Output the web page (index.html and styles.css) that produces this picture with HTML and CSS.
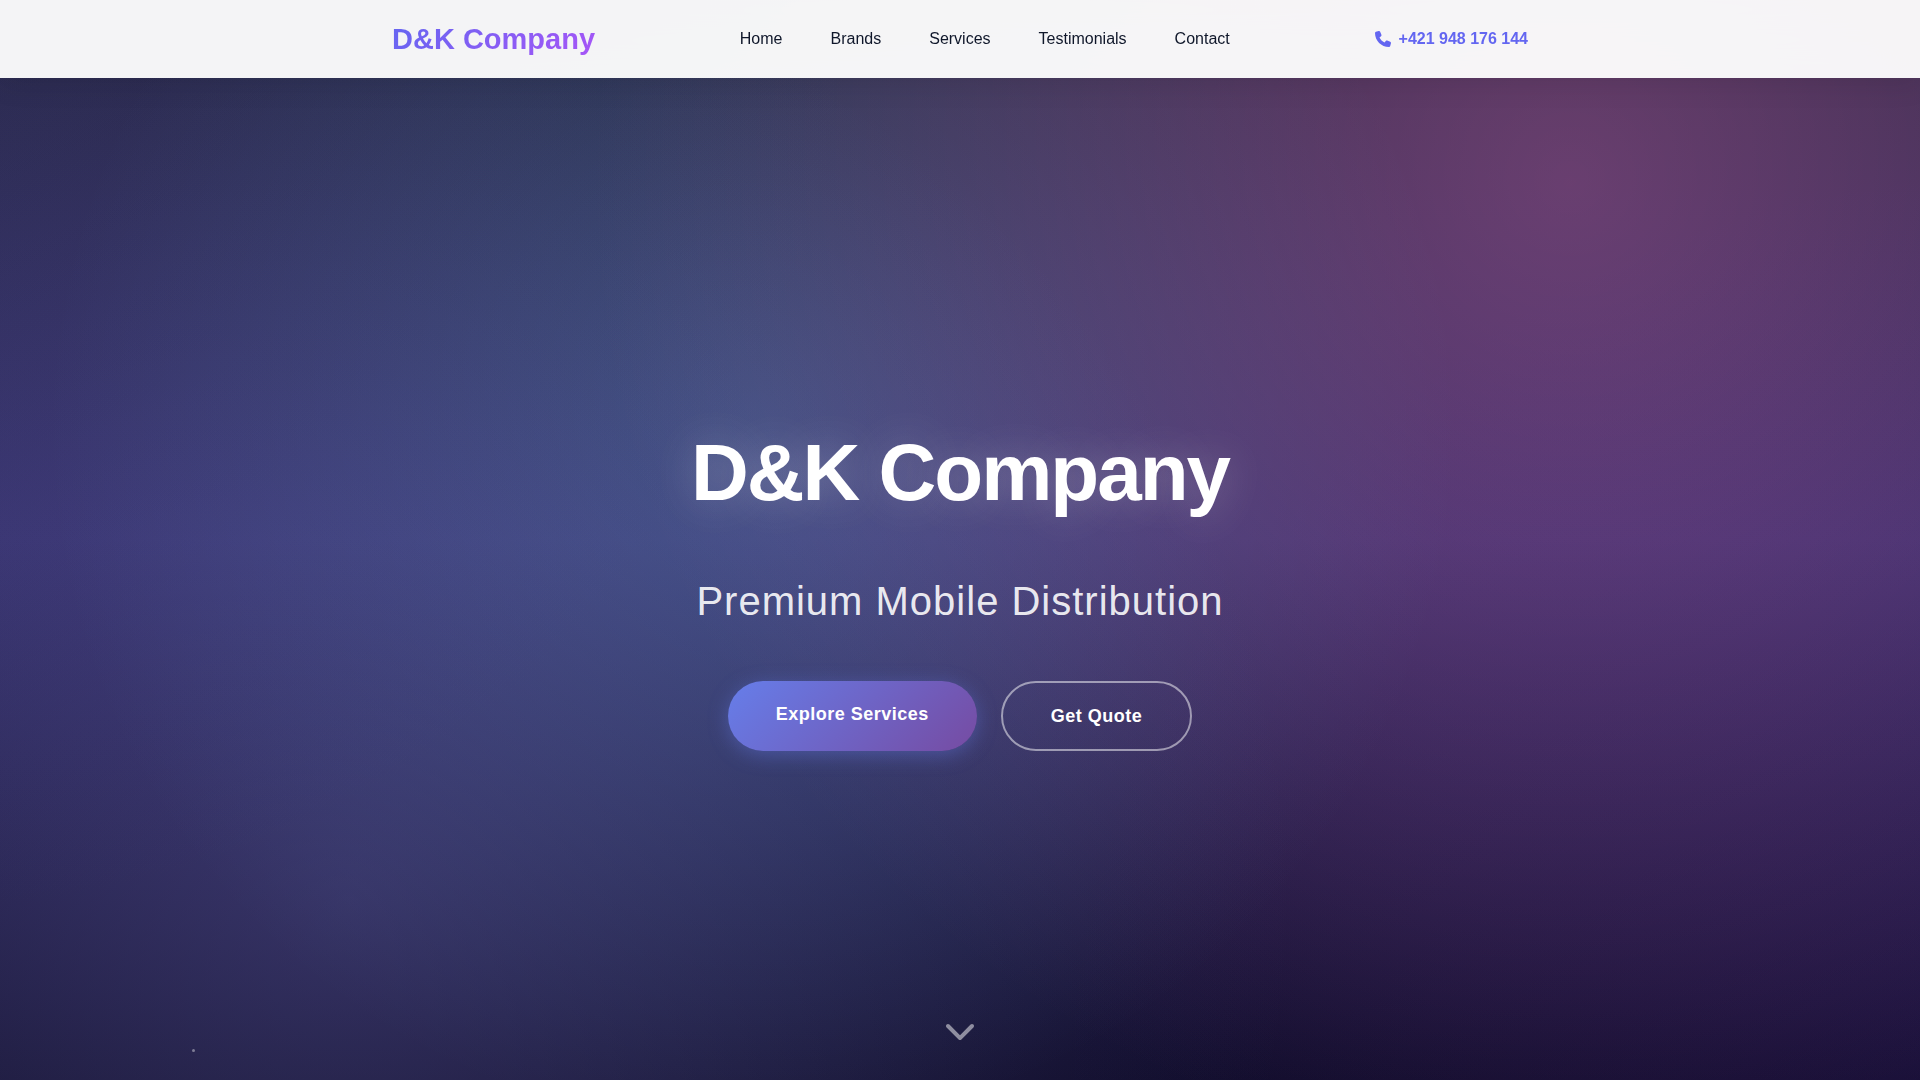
FILE: index.html
```html
<!DOCTYPE html>
<html lang="en">
<head>
    <meta charset="UTF-8">
    <meta name="viewport" content="width=device-width, initial-scale=1.0">
    <title>D&amp;K Company</title>
    <link rel="stylesheet" href="styles.css">
</head>
<body>
    <header class="header">
        <div class="header-container">
            <a href="#home" class="logo">D&amp;K Company</a>
            <nav class="nav">
                <a href="#home">Home</a>
                <a href="#brands">Brands</a>
                <a href="#services">Services</a>
                <a href="#testimonials">Testimonials</a>
                <a href="#contact">Contact</a>
            </nav>
            <a href="tel:+421948176144" class="header-phone">
                <svg class="phone-icon" viewBox="0 0 512 512" aria-hidden="true">
                    <path d="M164.9 24.6c-7.7-18.6-28-28.5-47.4-23.2l-88 24C12.1 30.2 0 46 0 64C0 311.4 200.6 512 448 512c18 0 33.8-12.1 38.6-29.5l24-88c5.3-19.4-4.6-39.7-23.2-47.4l-96-40c-16.3-6.8-35.2-2.1-46.3 11.6L304.7 368C234.3 334.7 177.3 277.7 144 207.3L193.3 167c13.7-11.2 18.4-30 11.6-46.3l-40-96z"/>
                </svg>
                +421 948 176 144
            </a>
        </div>
    </header>

    <section class="hero" id="home">
        <div class="hero-aurora"></div>
        <span class="particle"></span>
        <div class="hero-content">
            <h1>D&amp;K Company</h1>
            <p class="hero-subtitle">Premium Mobile Distribution</p>
            <div class="hero-buttons">
                <a href="#services" class="btn btn-primary">Explore Services</a>
                <a href="#contact" class="btn btn-secondary">Get Quote</a>
            </div>
        </div>
        <a href="#brands" class="scroll-indicator" aria-label="Scroll down">
            <svg viewBox="0 0 512 512" aria-hidden="true">
                <path d="M233.4 406.6c12.5 12.5 32.8 12.5 45.3 0l192-192c12.5-12.5 12.5-32.8 0-45.3s-32.8-12.5-45.3 0L256 338.7 86.6 169.4c-12.5-12.5-32.8-12.5-45.3 0s-12.5 32.8 0 45.3l192 192z"/>
            </svg>
        </a>
    </section>
</body>
</html>
```

FILE: styles.css
```css
* {
    margin: 0;
    padding: 0;
    box-sizing: border-box;
}

body {
    font-family: "Liberation Sans", Arial, sans-serif;
    line-height: 1.6;
    color: #0f172a;
}

a {
    text-decoration: none;
}

/* Header */
.header {
    position: fixed;
    top: 0;
    left: 0;
    right: 0;
    z-index: 10;
    background: rgba(255, 255, 255, 0.95);
    backdrop-filter: blur(20px);
    box-shadow: 0 4px 30px rgba(0, 0, 0, 0.1);
}

.header-container {
    max-width: 1200px;
    margin: 0 auto;
    padding: 16px 32px;
    display: flex;
    justify-content: space-between;
    align-items: center;
}

.logo {
    font-size: 29px;
    line-height: 46px;
    font-weight: 700;
    background: linear-gradient(135deg, #6366f1, #a855f7);
    -webkit-background-clip: text;
    background-clip: text;
    color: transparent;
}

.nav {
    display: flex;
    gap: 48px;
}

.nav a {
    color: #0f172a;
}

.header-phone {
    display: flex;
    align-items: center;
    gap: 8px;
    color: #6366f1;
    font-weight: 600;
}

.phone-icon {
    width: 16px;
    height: 16px;
    fill: currentColor;
}

/* Hero */
.hero {
    position: relative;
    min-height: 100vh;
    padding-top: 80px;
    display: flex;
    align-items: center;
    justify-content: center;
    overflow: hidden;
    background: linear-gradient(180deg, #24243e 0%, #302b63 50%, #0f0c29 100%);
}

.hero-aurora {
    position: absolute;
    inset: 0;
    transform: scale(1.07) rotate(-1deg);
    background:
        radial-gradient(circle at 100% 100%, rgba(110, 50, 180, 0.12) 0%, transparent 40%),
        radial-gradient(circle at 0% 0%, rgba(90, 90, 190, 0.12) 0%, transparent 40%),
        radial-gradient(circle at 20% 80%, rgba(120, 119, 198, 0.3) 0%, transparent 50%),
        radial-gradient(circle at 80% 20%, rgba(255, 119, 198, 0.3) 0%, transparent 52%),
        radial-gradient(circle at 40% 40%, rgba(120, 219, 255, 0.2) 0%, transparent 50%);
}

.particle {
    position: absolute;
    left: 10%;
    bottom: 28px;
    width: 3px;
    height: 3px;
    border-radius: 50%;
    background: rgba(255, 255, 255, 0.4);
}

.hero-content {
    position: relative;
    padding: 0 32px;
    text-align: center;
    color: #fff;
}

.hero-content h1 {
    font-size: 80px;
    font-weight: 800;
    letter-spacing: -2px;
    margin-bottom: 32px;
    text-shadow: 0 0 40px rgba(255, 255, 255, 0.25);
}

.hero-subtitle {
    font-size: 40px;
    font-weight: 300;
    letter-spacing: 1px;
    margin-bottom: 48px;
    color: rgba(255, 255, 255, 0.9);
}

.hero-buttons {
    display: flex;
    justify-content: center;
    gap: 24px;
}

.btn {
    padding: 19px 48px;
    border-radius: 50px;
    font-size: 18px;
    line-height: 28px;
    font-weight: 600;
    letter-spacing: 0.5px;
    color: #fff;
}

.btn-primary {
    background: linear-gradient(135deg, #667eea 0%, #764ba2 100%);
    box-shadow: 0 4px 20px rgba(102, 126, 234, 0.4);
}

.btn-secondary {
    border: 2px solid rgba(255, 255, 255, 0.5);
}

.scroll-indicator {
    position: absolute;
    bottom: 34px;
    left: 50%;
    transform: translateX(-50%);
    color: rgba(255, 255, 255, 0.5);
}

.scroll-indicator svg {
    display: block;
    width: 32px;
    height: 32px;
    fill: currentColor;
}
```
